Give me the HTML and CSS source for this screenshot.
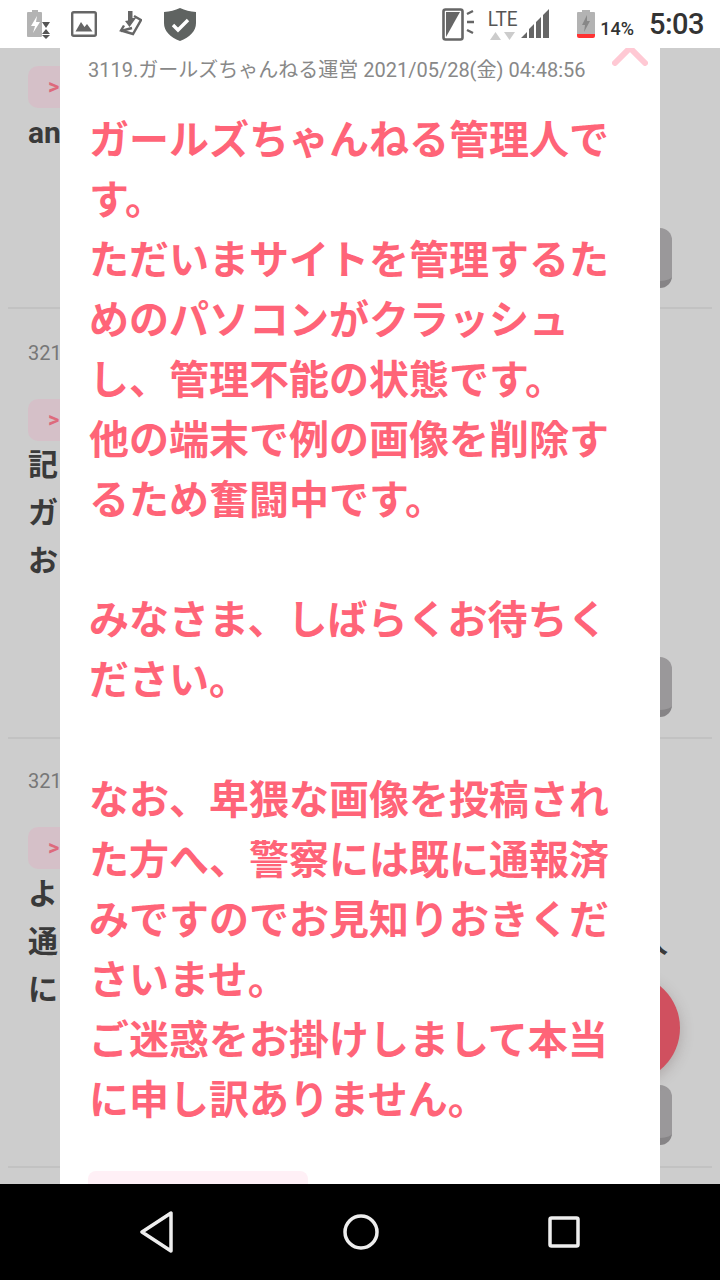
FILE: index.html
```html
<!DOCTYPE html>
<html lang="ja">
<head>
    <meta charset="UTF-8">
    <meta name="viewport" content="width=device-width, initial-scale=1.0">
    <title>ガールズちゃんねる</title>
    <link rel="stylesheet" href="styles.css">
</head>
<body>
    <div class="phone">
        <header class="status_bar">
            <div class="status_left">
                <svg class="icon" width="23" height="30" viewBox="0 0 23 30">
                    <path d="M5 3V1h6v2h3a1 1 0 0 1 1 1v23a1 1 0 0 1-1 1H1a1 1 0 0 1-1-1V4a1 1 0 0 1 1-1z" fill="#b3b3b3"/>
                    <path d="M10 7l-6 10h4l-2 7 7-11H9z" fill="#fff"/>
                    <path d="M15 13h8l-4 6zM15 25l4-5 4 5zM15 26h8l-4 4z" fill="#555"/>
                </svg>
                <svg class="icon" width="26" height="26" viewBox="0 0 26 26">
                    <rect x="1.200" y="1.200" width="23.600" height="23.600" rx="1.500" fill="none" stroke="#666" stroke-width="2.400"/>
                    <path d="M4.500 20.500L10 11l3.500 5 2.500-3 5.500 7.500z" fill="#666"/>
                </svg>
                <svg class="icon icon_dl" width="23" height="26" viewBox="0 0 23 26">
                    <path d="M9 0h4.500v7H17l-6.500 9L6 10l3-.5z" fill="#666"/>
                    <path d="M15 5l7 4-8 14-12-3.500 3-5" fill="none" stroke="#666" stroke-width="2.400"/>
                    <path d="M2 20l11-3" stroke="#666" stroke-width="2.400"/>
                </svg>
                <svg class="icon" width="32" height="33" viewBox="0 0 32 33">
                    <path d="M16 0c5 2.500 10 3.500 16 4v11c0 8-6 14-16 18C6 29 0 23 0 15V4c6-.5 11-1.500 16-4z" fill="#5f6361"/>
                    <path d="M9 17l5 5 10-10" fill="none" stroke="#fff" stroke-width="3.400"/>
                </svg>
            </div>
            <div class="status_right">
                <svg class="icon" width="32" height="33" viewBox="0 0 32 33">
                    <rect x="1.500" y="1.500" width="19" height="30" rx="2" fill="none" stroke="#666" stroke-width="2.600"/>
                    <path d="M4 4h14L4 29z" fill="#666"/>
                    <path d="M25 6l6-3M25 14h7M25 22l6 3" stroke="#666" stroke-width="2.400" fill="none"/>
                </svg>
                <div class="lte">
                    <span class="lte_text">LTE</span>
                    <svg class="lte_arrows" width="26" height="8" viewBox="0 0 26 8">
                        <path d="M1 8l5.500-8L12 8z" fill="#ccc"/>
                        <path d="M15 0h11l-5.500 8z" fill="#ccc"/>
                    </svg>
                </div>
                <svg class="icon signal" width="30" height="30" viewBox="0 0 30 30">
                    <path d="M0 29L6 23V29zM8 29V20l5-5V29zM15 29V13l5-5V29zM22 29V6l6-6V29z" fill="#666"/>
                </svg>
                <svg class="icon battery" width="18" height="28" viewBox="0 0 18 28">
                    <path d="M5 2V0h8v2h4a1 1 0 0 1 1 1v21H0V3a1 1 0 0 1 1-1z" fill="#b3b3b3"/>
                    <path d="M10 5l-5 10h3l-1 7 6-11h-3z" fill="#888"/>
                    <path d="M0 24h18v2a2 2 0 0 1-2 2H2a2 2 0 0 1-2-2z" fill="#f33"/>
                </svg>
                <span class="battery_pct">14%</span>
                <span class="clock">5:03</span>
            </div>
        </header>

        <main class="screen">
            <section class="row row_first">
                <div class="chip">&gt;</div>
                <p class="row_text">an</p>
                <div class="row_btn"></div>
            </section>
            <section class="row">
                <div class="row_meta">321</div>
                <div class="chip">&gt;</div>
                <p class="row_text">記<br>ガ<br>お</p>
                <div class="row_btn"></div>
            </section>
            <section class="row row_last">
                <div class="row_meta">321</div>
                <div class="chip">&gt;</div>
                <p class="row_text">よ<br><span class="split_line">通<span>人</span></span>に</p>
                <div class="row_btn"></div>
            </section>

            <div class="fab"></div>

            <div class="modal">
                <svg class="modal_close" width="36" height="24" viewBox="0 0 36 24">
                    <path d="M3 21L18 6l15 15" fill="none" stroke="#ffc9d4" stroke-width="6" stroke-linecap="round"/>
                </svg>
                <div class="modal_meta">3119.ガールズちゃんねる運営 2021/05/28(金) 04:48:56</div>
                <p class="modal_body">ガールズちゃんねる管理人です。<br>ただいまサイトを管理するためのパソコンがクラッシュし、管理不能の状態です。<br>他の端末で例の画像を削除するため奮闘中です。<br><br>みなさま、しばらくお待ちください。<br><br>なお、卑猥な画像を投稿された方へ、警察には既に通報済みですのでお見知りおきくださいませ。<br>ご迷惑をお掛けしまして本当に申し訳ありません。</p>
                <div class="modal_quote"></div>
            </div>
        </main>

        <footer class="nav_bar">
            <svg width="36" height="42" viewBox="0 0 36 42">
                <path d="M34 2v38L5 21z" fill="none" stroke="#eee" stroke-width="3.500" stroke-linejoin="round"/>
            </svg>
            <svg width="36" height="36" viewBox="0 0 36 36">
                <circle cx="18" cy="18" r="16" fill="none" stroke="#eee" stroke-width="3.500"/>
            </svg>
            <svg width="32" height="32" viewBox="0 0 32 32">
                <rect x="2" y="2" width="28" height="28" rx="1.500" fill="none" stroke="#eee" stroke-width="3.500"/>
            </svg>
        </footer>
    </div>
</body>
</html>
```

FILE: styles.css
```css
body {
    margin: 0;
    padding: 0;
    font-family: Roboto, "Noto Sans CJK JP", sans-serif;
}
p {
    margin: 0;
}
.phone {
    width: 720px;
    height: 1280px;
    display: flex;
    flex-direction: column;
    overflow: hidden;
}
.status_bar {
    height: 48px;
    flex: none;
    background-color: white;
    display: flex;
    justify-content: space-between;
    align-items: center;
    padding: 0 16px 0 27px;
    position: relative;
    z-index: 1;
}
.status_left {
    display: flex;
    align-items: center;
    gap: 21px;
}
.status_right {
    display: flex;
    align-items: center;
}
.icon {
    display: block;
}
.icon_dl {
    margin: 0 1px 0 1px;
}
.lte {
    width: 30px;
    margin-left: 13px;
    display: flex;
    flex-direction: column;
    align-items: center;
}
.lte_text {
    font-size: 20px;
    line-height: 20px;
    color: #555;
    transform: scaleX(0.95);
}
.lte_arrows {
    margin-top: 3px;
}
.signal {
    margin-left: 4px;
}
.battery {
    margin-left: 26px;
}
.battery_pct {
    margin: 8px 0 0 5px;
    font-size: 18px;
    font-weight: 500;
    color: #333;
}
.clock {
    margin-left: 15px;
    font-size: 29px;
    font-weight: 500;
    letter-spacing: -0.5px;
    color: #333;
}
.screen {
    flex: 1;
    position: relative;
    overflow: hidden;
    background-color: #cdcdcd;
}
.row {
    margin: 0 8px;
    padding: 31px 40px 20px 20px;
    border-bottom: 2px solid #c2c2c2;
}
.row_first {
    padding-top: 18px;
    height: 261px;
    box-sizing: border-box;
}
.row_meta {
    font-size: 20px;
    line-height: 26px;
    color: #777;
}
.chip {
    width: 80px;
    height: 42px;
    margin-top: 33px;
    border-radius: 10px;
    background-color: #d5c0c8;
    color: #dd6a7c;
    font-size: 22px;
    font-weight: bold;
    line-height: 42px;
    padding-left: 20px;
    box-sizing: border-box;
}
.row_first .chip {
    margin-top: 0;
}
.row_text {
    font-size: 30px;
    font-weight: bold;
    line-height: 48px;
    color: #3a3a3a;
}
.row_first .row_text {
    margin-top: 1px;
}
.split_line {
    display: flex;
    justify-content: space-between;
    padding-right: 4px;
}
.row_btn {
    width: 80px;
    height: 60px;
    margin: 72px 0 0 auto;
    box-sizing: border-box;
    border-radius: 12px;
    background-color: #9a989a;
    border-bottom: 7px solid #868486;
}
.row_first .row_btn {
    margin-top: 71px;
}
.row_last {
    padding-top: 29px;
    padding-bottom: 21px;
}
.row_last .row_text {
    margin-top: 1px;
}
.row_last .row_btn {
    margin-top: 71px;
}
.fab {
    position: absolute;
    left: 572px;
    top: 926px;
    width: 108px;
    height: 108px;
    border-radius: 50%;
    background-color: #d0505f;
    box-shadow: 0 4px 14px rgba(90, 70, 70, 0.28);
}
.modal {
    position: absolute;
    left: 60px;
    top: 0;
    width: 600px;
    height: 1136px;
    box-sizing: border-box;
    padding: 0 28px;
    background-color: white;
    overflow: hidden;
}
.modal_close {
    position: absolute;
    right: 12px;
    top: -6px;
}
.modal_meta {
    margin-top: 8px;
    font-size: 20px;
    line-height: 28px;
    color: #888;
    white-space: nowrap;
}
.modal_body {
    margin: 27px 0 0 1px;
    width: 530px;
    font-size: 40px;
    font-weight: bold;
    line-height: 60px;
    color: #ff6478;
}
.modal_quote {
    width: 220px;
    height: 40px;
    margin-top: 40px;
    border-radius: 8px;
    background-color: #fff0f6;
}
.nav_bar {
    height: 96px;
    flex: none;
    background-color: black;
    display: flex;
    align-items: center;
    justify-content: space-between;
    padding: 0 140px 0 137px;
}
```
